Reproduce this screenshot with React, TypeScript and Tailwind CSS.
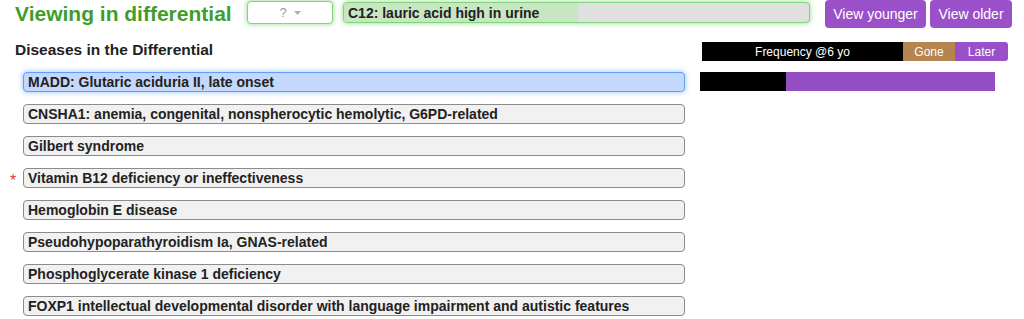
const diseases = [
  { name: "MADD: Glutaric aciduria II, late onset", focused: true },
  { name: "CNSHA1: anemia, congenital, nonspherocytic hemolytic, G6PD-related" },
  { name: "Gilbert syndrome" },
  { name: "Vitamin B12 deficiency or ineffectiveness", starred: true },
  { name: "Hemoglobin E disease" },
  { name: "Pseudohypoparathyroidism Ia, GNAS-related" },
  { name: "Phosphoglycerate kinase 1 deficiency" },
  { name: "FOXP1 intellectual developmental disorder with language impairment and autistic features" },
];

function Header() {
  return (
    <div className="flex h-7 items-start pl-[15px]">
      <h1 className="w-[232px] shrink-0 text-[21px] font-bold leading-[28px] text-[#3f9d2d]">
        Viewing in differential
      </h1>
      <button className="mt-[1px] flex h-[23px] w-[86px] shrink-0 items-center justify-center gap-[7px] rounded-[4px] border border-[#7fd67a] bg-white text-[13px] text-[#9a9a9a] shadow-[0_0_4px_1px_rgba(110,210,100,0.55)]">
        <span>?</span>
        <svg width="7" height="4" viewBox="0 0 7 4">
          <path d="M0 0h7L3.5 4z" fill="#b0b0b0" />
        </svg>
      </button>
      <div className="ml-[10px] mt-[2px] flex h-[21px] w-[467px] shrink-0 overflow-hidden rounded-[4px] border border-[#7fd67a] bg-[#e0e0e0] shadow-[0_0_4px_1px_rgba(110,210,100,0.55)]">
        <div className="flex w-[234px] shrink-0 items-center bg-[#c8e6c2] pl-[4px]">
          <span className="whitespace-nowrap text-[14px] font-bold leading-none text-[#222]">
            C12: lauric acid high in urine
          </span>
        </div>
      </div>
      <button className="ml-[15px] h-7 w-[101px] shrink-0 rounded-[4px] bg-[#9a50c8] text-[14px] text-white">
        View younger
      </button>
      <button className="ml-[4px] h-7 w-[82px] shrink-0 rounded-[4px] bg-[#9a50c8] text-[14px] text-white">
        View older
      </button>
    </div>
  );
}

function DiseaseRow({ name, focused, starred }: { name: string; focused?: boolean; starred?: boolean }) {
  return (
    <div className="flex h-5 items-center">
      <div className="w-[23px] shrink-0 pl-[10px] pt-[6px] text-[16px] leading-none text-[#e0402b]">
        {starred ? "*" : ""}
      </div>
      <div
        className={
          focused
            ? "flex h-5 w-[662px] items-center rounded-[4px] border border-[#5e9ef5] bg-[#c4d8fb] pl-[4px] shadow-[0_0_5px_1px_rgba(96,160,250,0.5)]"
            : "flex h-5 w-[662px] items-center rounded-[4px] border border-[#8c8c8c] bg-[#f1f1f1] pl-[4px]"
        }
      >
        <span className="whitespace-nowrap text-[14px] font-bold leading-none text-[#222]">{name}</span>
      </div>
    </div>
  );
}

function FrequencyPanel() {
  return (
    <div className="ml-[15px] flex flex-col">
      <div className="ml-[2px] flex h-[19px] w-[306px] overflow-hidden rounded-r-[3px] text-[12px] leading-none text-white">
        <div className="flex w-[201px] items-center justify-center bg-black">Frequency @6 yo</div>
        <div className="flex w-[52px] items-center justify-center bg-[#b5844f]">Gone</div>
        <div className="flex w-[53px] items-center justify-center bg-[#9a50c8]">Later</div>
      </div>
      <div className="mt-[11px] flex h-[19px] w-[295px]">
        <div className="w-[86px] bg-black" />
        <div className="flex-1 bg-[#954fc4]" />
      </div>
    </div>
  );
}

export default function App() {
  return (
    <div
      className="h-[319px] w-[1024px] overflow-hidden bg-white text-[#222]"
      style={{ fontFamily: '"Liberation Sans", Arial, sans-serif' }}
    >
      <Header />
      <div className="mt-[14px] flex">
        <div className="flex flex-col">
          <h2 className="pl-[15px] text-[15.5px] font-bold leading-[15px] text-[#222]">
            Diseases in the Differential
          </h2>
          <div className="mt-[15px] flex flex-col gap-3">
            {diseases.map((d) => (
              <DiseaseRow key={d.name} name={d.name} focused={d.focused} starred={d.starred} />
            ))}
          </div>
        </div>
        <FrequencyPanel />
      </div>
    </div>
  );
}
